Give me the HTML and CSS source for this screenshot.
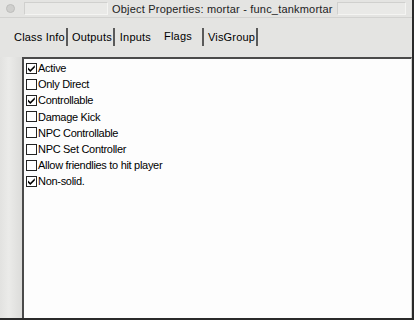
FILE: index.html
```html
<!DOCTYPE html>
<html lang="en">
<head>
    <meta charset="UTF-8">
    <title>Object Properties: mortar - func_tankmortar</title>
    <link rel="stylesheet" href="styles.css">
</head>
<body>
    <div class="window">
        <!-- title bar -->
        <div class="titlebar">
            <span class="sys-icon"></span>
            <span class="title-strip first"></span>
            <span class="title-text">Object Properties: mortar - func_tankmortar</span>
            <span class="title-strip"></span>
        </div>

        <!-- tabs -->
        <div class="tabs">
            <span class="tab">Class Info</span>
            <span class="tab">Outputs</span>
            <span class="tab no-sep">Inputs</span>
            <span class="tab active">Flags</span>
            <span class="tab">VisGroup</span>
        </div>

        <div class="body">
            <div class="side"></div>
            <div class="panel">
                <label class="flag"><span class="box checked"><svg viewBox="0 0 9 9"><path d="M1 3.5 L3.3 5.8 L7.8 1.2 L7.8 3.6 L3.3 8.1 L1 5.8 Z"/></svg></span>Active</label>
                <label class="flag"><span class="box"></span>Only Direct</label>
                <label class="flag"><span class="box checked"><svg viewBox="0 0 9 9"><path d="M1 3.5 L3.3 5.8 L7.8 1.2 L7.8 3.6 L3.3 8.1 L1 5.8 Z"/></svg></span>Controllable</label>
                <label class="flag"><span class="box"></span>Damage Kick</label>
                <label class="flag"><span class="box"></span>NPC Controllable</label>
                <label class="flag"><span class="box"></span>NPC Set Controller</label>
                <label class="flag"><span class="box"></span>Allow friendlies to hit player</label>
                <label class="flag"><span class="box checked"><svg viewBox="0 0 9 9"><path d="M1 3.5 L3.3 5.8 L7.8 1.2 L7.8 3.6 L3.3 8.1 L1 5.8 Z"/></svg></span>Non-solid.</label>
            </div>
        </div>
    </div>
</body>
</html>
```

FILE: styles.css
```css
body {
    margin: 0;
    background: #e4e4e2;
    font-family: 'Liberation Sans', Arial, sans-serif;
    font-size: 12px;
    color: #000;
}

.window {
    width: 412px;
    height: 318px;
    border-right: 2px solid #2a2a2a;
    border-bottom: 2px solid #2a2a2a;
    display: flex;
    flex-direction: column;
    background: #e4e4e2;
}

.titlebar {
    height: 17px;
    display: flex;
    align-items: center;
    gap: 4px;
    padding: 0 6px 0 6px;
    border-bottom: 1px solid #d2d2d0;
}

.sys-icon {
    width: 7px;
    height: 7px;
    border-radius: 50%;
    background: #cfcfcd;
    border: 1px solid #bdbdbb;
    margin-right: 5px;
}

.title-strip {
    flex: 1;
    height: 11px;
    border: 1px solid #d0d0ce;
    border-right-color: #f4f4f2;
    border-bottom-color: #f4f4f2;
    background: #e9e9e7;
}

.title-strip.first {
    flex: none;
    width: 82px;
}

.title-text {
    font-size: 11px;
    letter-spacing: 0.2px;
    color: #222;
    padding: 1px 0 0 0;
}

.tabs {
    display: flex;
    align-items: center;
    height: 26px;
    margin-top: 6px;
    padding-left: 14px;
    font-size: 11px;
    letter-spacing: 0.2px;
}

.tab {
    padding: 0 1px 0 0;
    margin-right: 4px;
    border-right: 2px solid #5a5a5a;
    line-height: 18px;
    height: 18px;
}

.tab:nth-child(2) { margin-right: 5px; }

.tab.no-sep {
    border-right: none;
    margin-right: 0;
}

.tab.active {
    border-right: none;
    padding: 0 10px 3px 12px;
    margin-right: 0;
}

.tab.active + .tab {
    border-left: 2px solid #5a5a5a;
    padding-left: 4px;
}

.body {
    flex: 1;
    display: flex;
    margin-top: 7px;
}

.side {
    width: 22px;
    background: linear-gradient(to right, #e2e2e0, #ebebe9 40%, #dcdcda);
}

.panel {
    flex: 1;
    background: #fdfdfd;
    border-top: 2px solid #4a4a4a;
    border-left: 2px solid #4a4a4a;
    border-right: 1px solid #d4d4d2;
    padding: 1px 0 0 2px;
    display: flex;
    flex-direction: column;
    font-size: 11px;
    letter-spacing: -0.3px;
}

.flag {
    display: flex;
    align-items: center;
    height: 16.2px;
    gap: 1px;
}

.box {
    width: 9px;
    height: 9px;
    border: 1px solid #222;
    background: #fff;
    display: flex;
}

.box svg {
    width: 9px;
    height: 9px;
    fill: #000;
}
```
